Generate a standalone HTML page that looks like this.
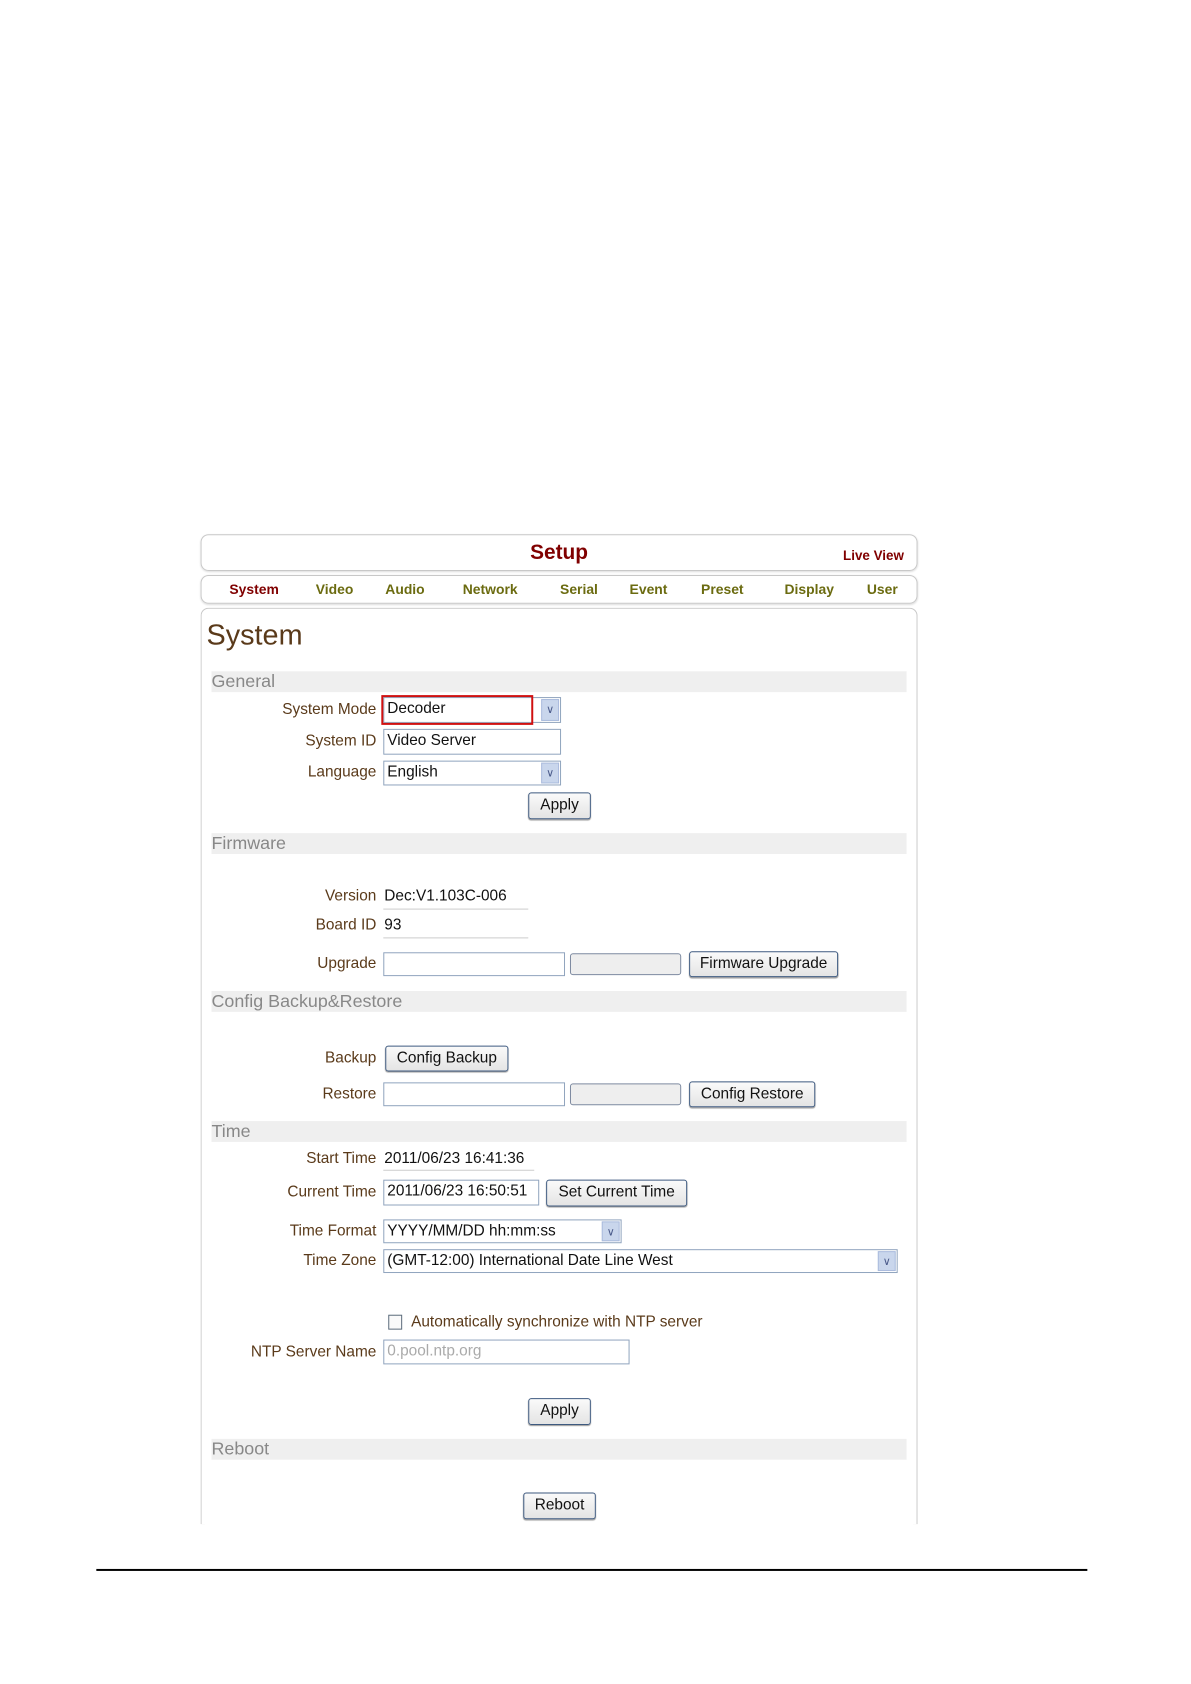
<!DOCTYPE html>
<html><head><meta charset="utf-8"><style>
*{margin:0;padding:0;box-sizing:border-box}
body{width:1191px;height:1684px;background:#fff;position:relative;font-family:"Liberation Sans",Arial,sans-serif;overflow:hidden}
#w{position:absolute;left:0;top:0;width:1191px;height:1684px;transform:scale(0.993);transform-origin:0 0}
.a{position:absolute}
.box{position:absolute;border:1px solid #c8c8c8;border-radius:8px;box-shadow:0 1px 2px #ddd}
.nav{position:absolute;top:584px;font-size:14px;font-weight:bold;color:#6b6b10;line-height:18px}
.bar{position:absolute;left:213px;width:700px;height:21px;background:#efefef;color:#888;font-size:18px;line-height:21px;padding-left:0}
.l{position:absolute;right:812px;font-size:15.5px;color:#5a3a1a;line-height:18px;white-space:nowrap}
.v{position:absolute;font-size:15.5px;color:#111;line-height:18px;white-space:nowrap}
.in{position:absolute;border:1px solid #8fa3bd;background:#fff;font-size:15.5px;line-height:22px;padding-left:3px;color:#111;white-space:nowrap;overflow:hidden}
.sel .ar{position:absolute;right:1px;top:1px;bottom:1px;width:18px;background:#c9d6ec;border:1px solid #aabbdd;color:#4a5a8a;font-size:11px;text-align:center;line-height:20px}
.btn{position:absolute;border:1px solid #3e5a80;border-radius:3px;background:linear-gradient(#fafafa,#e4e4e4);font-size:15.5px;color:#111;text-align:center;line-height:24px;box-shadow:0 1px 1px #999}
.gray{position:absolute;border:1px solid #7d8aa0;border-radius:3px;background:#eee}
.ul{position:absolute;height:1px;background:#ccc}
</style></head><body><div id="w">
<div class="box" style="left:202px;top:538px;width:722px;height:37px"></div>
<div class="a" style="left:463px;width:200px;text-align:center;top:545px;font-size:21px;font-weight:bold;color:#800000">Setup</div>
<div class="a" style="left:849px;top:552px;font-size:13.5px;font-weight:bold;color:#800000">Live View</div>
<div class="box" style="left:202px;top:579px;width:722px;height:29px"></div>
<div class="nav" style="left:231px;color:#800000">System</div>
<div class="nav" style="left:318px">Video</div>
<div class="nav" style="left:388px">Audio</div>
<div class="nav" style="left:466px">Network</div>
<div class="nav" style="left:564px">Serial</div>
<div class="nav" style="left:634px">Event</div>
<div class="nav" style="left:706px">Preset</div>
<div class="nav" style="left:790px">Display</div>
<div class="nav" style="left:873px">User</div>
<div class="a" style="left:202px;top:612px;width:722px;height:923px;border:1px solid #c8c8c8;border-bottom:none;border-radius:8px 8px 0 0"></div>
<div class="a" style="left:208px;top:624px;font-size:29px;color:#5a3a1a">System</div>

<div class="bar" style="top:676px">General</div>
<div class="l" style="top:706px">System Mode</div>
<div class="in sel" style="left:386px;top:702px;width:179px;height:26px">Decoder<div class="ar">&#8744;</div></div>
<div class="a" style="left:384px;top:700px;width:153px;height:30px;border:2px solid #d01010"></div>
<div class="l" style="top:738px">System ID</div>
<div class="in" style="left:386px;top:734px;width:179px;height:26px">Video Server</div>
<div class="l" style="top:769px">Language</div>
<div class="in sel" style="left:386px;top:766px;width:179px;height:25px">English<div class="ar">&#8744;</div></div>
<div class="btn" style="left:532px;top:798px;width:63px;height:27px">Apply</div>

<div class="bar" style="top:839px">Firmware</div>
<div class="l" style="top:894px">Version</div>
<div class="v" style="left:387px;top:894px">Dec:V1.103C-006</div>
<div class="ul" style="left:386px;top:915px;width:146px"></div>
<div class="l" style="top:923px">Board ID</div>
<div class="v" style="left:387px;top:923px">93</div>
<div class="ul" style="left:386px;top:944px;width:146px"></div>
<div class="l" style="top:962px">Upgrade</div>
<div class="in" style="left:386px;top:959px;width:183px;height:24px"></div>
<div class="gray" style="left:574px;top:960px;width:112px;height:22px"></div>
<div class="btn" style="left:694px;top:958px;width:150px;height:26px">Firmware Upgrade</div>

<div class="bar" style="top:998px">Config Backup&amp;Restore</div>
<div class="l" style="top:1057px">Backup</div>
<div class="btn" style="left:388px;top:1053px;width:124px;height:26px">Config Backup</div>
<div class="l" style="top:1093px">Restore</div>
<div class="in" style="left:386px;top:1090px;width:183px;height:24px"></div>
<div class="gray" style="left:574px;top:1091px;width:112px;height:22px"></div>
<div class="btn" style="left:694px;top:1089px;width:127px;height:26px">Config Restore</div>

<div class="bar" style="top:1129px">Time</div>
<div class="l" style="top:1158px">Start Time</div>
<div class="v" style="left:387px;top:1158px">2011/06/23 16:41:36</div>
<div class="ul" style="left:386px;top:1178px;width:152px"></div>
<div class="l" style="top:1192px">Current Time</div>
<div class="in" style="left:386px;top:1188px;width:157px;height:26px">2011/06/23 16:50:51</div>
<div class="btn" style="left:550px;top:1188px;width:142px;height:27px">Set Current Time</div>
<div class="l" style="top:1231px">Time Format</div>
<div class="in sel" style="left:386px;top:1228px;width:240px;height:24px">YYYY/MM/DD hh:mm:ss<div class="ar">&#8744;</div></div>
<div class="l" style="top:1261px">Time Zone</div>
<div class="in sel" style="left:386px;top:1258px;width:518px;height:24px">(GMT-12:00) International Date Line West<div class="ar">&#8744;</div></div>
<div class="a" style="left:391px;top:1324px;width:14px;height:15px;border:1px solid #5a6a7a;background:#fafafa"></div>
<div class="v" style="left:414px;top:1323px;color:#5a3a1a">Automatically synchronize with NTP server</div>
<div class="l" style="top:1353px">NTP Server Name</div>
<div class="in" style="left:386px;top:1349px;width:248px;height:25px;color:#aaa">0.pool.ntp.org</div>
<div class="btn" style="left:532px;top:1408px;width:63px;height:27px">Apply</div>

<div class="bar" style="top:1449px">Reboot</div>
<div class="btn" style="left:527px;top:1503px;width:73px;height:27px">Reboot</div>

<div class="a" style="left:97px;top:1580px;width:998px;height:1.5px;background:#000"></div>
</div></body></html>
